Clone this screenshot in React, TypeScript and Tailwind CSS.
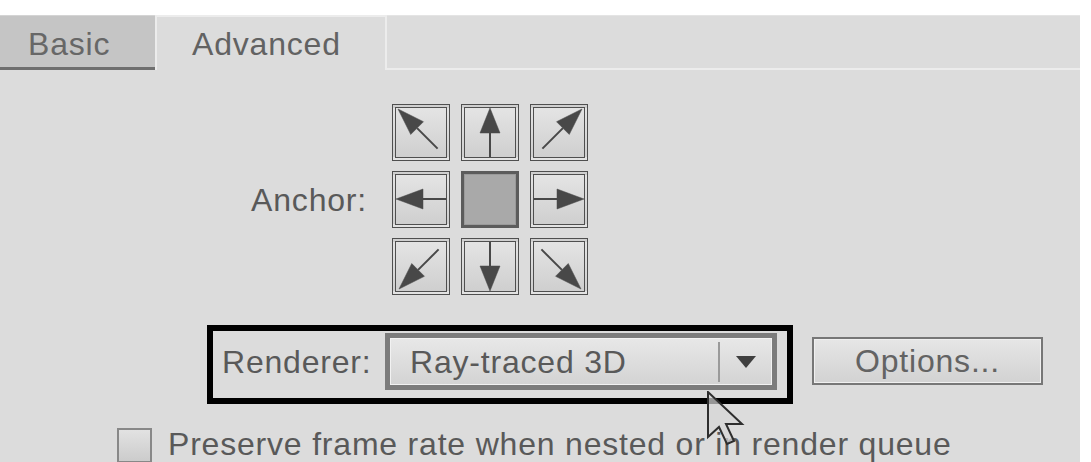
import React from 'react';

// Anchor arrows: drawn pointing up from the apex, then rotated into place
type ArrowSpec = { x: number; y: number; angle: number; len: number; head: number; half: number };

const ARROWS: Record<string, ArrowSpec | null> = {
  tl: { x: 2, y: 1, angle: -45, len: 56, head: 27, half: 9 },
  t: { x: 25, y: 0, angle: 0, len: 49, head: 25, half: 10 },
  tr: { x: 48, y: 1, angle: 45, len: 56, head: 27, half: 9 },
  l: { x: 0, y: 24, angle: -90, len: 50, head: 27, half: 10 },
  c: null,
  r: { x: 50, y: 24, angle: 90, len: 50, head: 27, half: 10 },
  bl: { x: 3, y: 47, angle: -135, len: 56, head: 27, half: 9 },
  b: { x: 25, y: 49, angle: 180, len: 49, head: 25, half: 10 },
  br: { x: 47, y: 47, angle: 135, len: 56, head: 27, half: 9 },
};

const ORDER = ['tl', 't', 'tr', 'l', 'c', 'r', 'bl', 'b', 'br'];

function AnchorCell({ id }: { id: string }) {
  const a = ARROWS[id];

  if (!a) {
    return <div className="border-[3px] border-[#5c5c5c] bg-[#a9a9a9] shadow-[inset_0_0_0_1px_#9a9a9a]" />;
  }

  return (
    <div className="border-[4px] border-double border-[#4f4f4f] bg-gradient-to-b from-[#e4e4e4] to-[#cfcfcf]">
      <svg viewBox="0 0 50 49" className="w-full h-full overflow-visible">
        <g transform={`translate(${a.x} ${a.y}) rotate(${a.angle})`} fill="#484848" stroke="#484848">
          <polygon points={`0,0 ${-a.half},${a.head} ${a.half},${a.head}`} strokeWidth="0.5" />
          <line x1="0" y1={a.head} x2="0" y2={a.len} strokeWidth="2" />
        </g>
      </svg>
    </div>
  );
}

export default function App() {
  return (
    <div className="relative w-[1091px] h-[462px] overflow-hidden bg-white pt-[15px] font-['Liberation_Sans',Arial,sans-serif] text-[32px] leading-[40px] tracking-[0.8px] text-[#595959]">
      <div className="w-[1080px] h-[447px] bg-[#dcdcdc]">
        {/* Tabs */}
        <div className="flex h-[55px]">
          <div className="w-[155px] flex items-center pl-[28px] pt-[5px] bg-[#c5c5c5] border-t border-t-[#d4d4d4] border-b-[3px] border-b-[#6f6f6f] text-[#676767]">
            Basic
          </div>
          <div className="w-[232px] flex items-center pl-[35px] border-x-2 border-t-2 border-[#ececec] text-[#626262]">
            Advanced
          </div>
          <div className="flex-1 border-t border-b-2 border-t-[#e4e4e4] border-b-[#ececec]" />
        </div>

        {/* Anchor */}
        <div className="flex items-center mt-[34px]">
          <div className="w-[367px] text-right">Anchor:</div>
          <div className="ml-[25px] grid grid-cols-[58px_58px_58px] grid-rows-[57px_57px_57px] gap-x-[11px] gap-y-[10px]">
            {ORDER.map((id) => (
              <AnchorCell key={id} id={id} />
            ))}
          </div>
        </div>

        {/* Renderer */}
        <div className="flex items-start ml-[207px] mt-[30px]">
          <div className="flex items-start h-[79px] border-[6px] border-black pl-[9px] pr-[10px]">
            <div className="w-[163px] mt-[11px]">Renderer:</div>
            <div className="mt-[2px] w-[392px] h-[57px] flex items-center border-[5px] border-[#7c7c7c] bg-gradient-to-b from-[#e8e8e8] to-[#d3d3d3] shadow-[inset_0_0_0_1px_#f2f2f2]">
              <span className="flex-1 pl-[20px]">Ray-traced 3D</span>
              <span className="w-[2px] h-[40px] bg-[#9a9a9a]" />
              <span className="w-[52px] flex justify-center">
                <svg width="20" height="12" viewBox="0 0 20 12">
                  <polygon points="0,0 20,0 10,12" fill="#3f3f3f" />
                </svg>
              </span>
            </div>
          </div>
          <button className="ml-[19px] mt-[12px] w-[231px] h-[48px] flex items-center justify-center border-2 border-[#777777] bg-gradient-to-b from-[#e6e6e6] to-[#d2d2d2] text-[#636363] shadow-[inset_0_0_0_1px_#f0f0f0]">
            Options...
          </button>
        </div>

        {/* Preserve frame rate */}
        <div className="flex items-start pl-[117px] mt-[20px]">
          <div className="mt-[4px] w-[35px] h-[35px] border-2 border-[#888888] bg-gradient-to-b from-[#e2e2e2] to-[#cccccc]" />
          <span className="ml-[16px] whitespace-nowrap">Preserve frame rate when nested or in render queue</span>
        </div>
      </div>

      {/* Mouse pointer */}
      <svg className="absolute left-[706px] top-[391px]" width="42" height="56" viewBox="0 0 42 56">
        <polygon
          points="2,1 2,46 13,36 21,53 28,50 20,33 36,33"
          fill="#d6d6d6"
          fillOpacity="0.7"
          stroke="#2e2e2e"
          strokeWidth="2"
          strokeLinejoin="miter"
        />
      </svg>
    </div>
  );
}
